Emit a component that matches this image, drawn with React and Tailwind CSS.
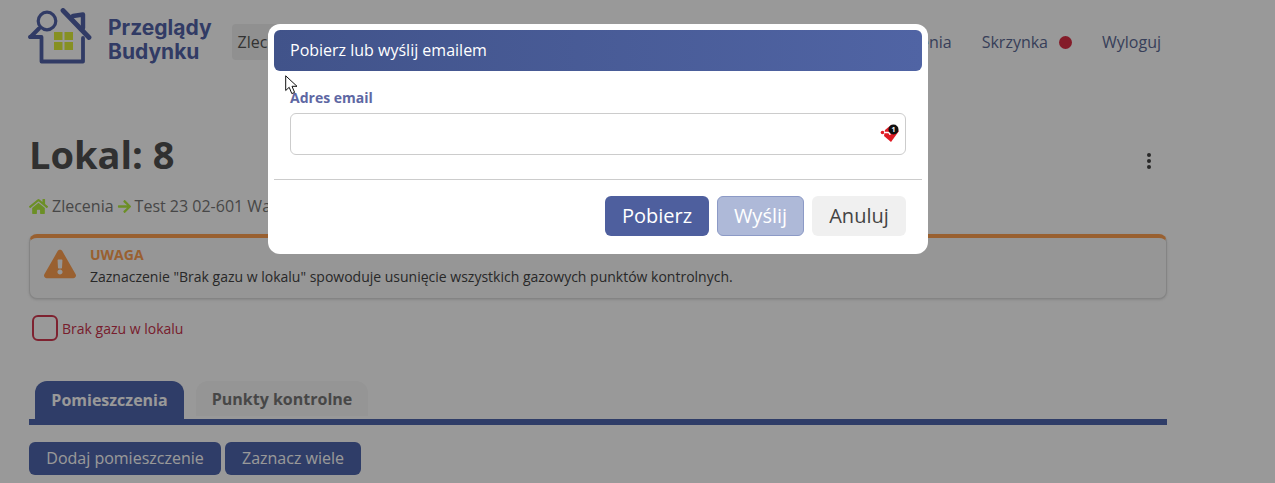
import { FaHome, FaArrowRight, FaExclamationTriangle } from 'react-icons/fa'

const font = "font-['Open_Sans',sans-serif]"

function Logo() {
  return (
    <svg width="66" height="56" viewBox="0 0 66 56" fill="none" className="shrink-0">
      <g stroke="#5263a8" strokeLinecap="round" strokeLinejoin="round">
        <path d="M2 29 L6 29 L13.5 29 V53.5 H55 V30" strokeWidth="3.8" />
        <path d="M35 2.5 L61 29.5" strokeWidth="4.8" />
        <path d="M45 8 L55 6.5 V20" strokeWidth="4.4" />
        <circle cx="19" cy="13" r="8.8" strokeWidth="3.2" />
        <path d="M11 20.5 L2.5 29" strokeWidth="4" />
      </g>
      <g fill="#e0f03a">
        <rect x="26" y="24" width="8.5" height="8" />
        <rect x="36.5" y="24" width="8.5" height="8" />
        <rect x="26" y="34" width="8.5" height="8" />
        <rect x="36.5" y="34" width="8.5" height="8" />
      </g>
    </svg>
  )
}

function TagBadge() {
  return (
    <svg width="22" height="22" viewBox="0 0 22 22" className="absolute right-[4px] top-[8px]">
      <path d="M6 8 L12 3 L20 9 L12 20 L5 14 Z" fill="#e01b24" />
      <circle cx="3.5" cy="10.5" r="1.8" fill="#e01b24" />
      <path d="M5 10.5 H9 Q11 10.5 11 13" stroke="#fff" strokeWidth="1.3" fill="none" />
      <circle cx="14.5" cy="7.5" r="5" fill="#111" />
      <text x="14.5" y="10" textAnchor="middle" fontSize="7" fontWeight="700" fill="#fff" fontFamily="Open Sans, sans-serif">1</text>
    </svg>
  )
}

function Cursor() {
  return (
    <svg width="15" height="21" viewBox="0 0 15 21" className="absolute left-[285px] top-[75px]">
      <path d="M0.7 0.8 V15.5 L4.2 12.3 L6.8 18.6 L9.6 17.4 L7 11.3 H12 Z" fill="#fff" stroke="#111" strokeWidth="1" />
    </svg>
  )
}

export default function App() {
  return (
    <div className={`relative h-[483px] overflow-hidden bg-white ${font}`}>
      <nav className="flex h-[84px] w-[1167px] items-center pl-[28px]">
        <div className="mb-[12px] flex items-center gap-[14px]">
          <Logo />
          <div className="mt-[7px] font-['Inter',sans-serif] text-[21px] font-bold leading-[24px] text-[#5263a8]">
            Przeglądy<br />Budynku
          </div>
        </div>
        <a className="ml-[20px] flex h-[36px] items-center rounded bg-[#f0f0f0] px-[6px] text-base text-[#555]">Zlecenia</a>
        <div className="ml-auto flex items-center text-base text-[#5d6a95]">
          <span>Ustawienia</span>
          <span className="ml-[30px]">Skrzynka</span>
          <span className="ml-[11px] h-[13px] w-[13px] rounded-full bg-[#dc2f45]" />
          <span className="ml-[30px] mr-[6px]">Wyloguj</span>
        </div>
      </nav>

      <main className="w-[1167px] pl-[29px] pt-[40px]">
        <div className="flex h-[60px] items-center justify-between">
          <h1 className="text-[38px] font-bold leading-none text-[#505050]">Lokal: 8</h1>
          <div className="mr-[16px] mt-[14px] flex flex-col gap-[2px]">
            <span className="h-[4px] w-[4px] rounded-full bg-[#444]" />
            <span className="h-[4px] w-[4px] rounded-full bg-[#444]" />
            <span className="h-[4px] w-[4px] rounded-full bg-[#444]" />
          </div>
        </div>
        <div className="mt-[11px] flex h-[22px] items-center text-base text-[#777]">
          <FaHome className="mr-[4px] text-[19px] text-[#b4ee40]" />
          <span>Zlecenia</span>
          <FaArrowRight className="mx-[3px] text-[15px] text-[#b4ee40]" />
          <span>Test 23 02-601 Warszawa</span>
        </div>

        <div className="mt-[17px] flex h-[65px] rounded-lg border border-t-4 border-[#ddd] border-t-[#ffa050] bg-[#fafafa] shadow-sm">
          <div className="flex w-[60px] justify-center pt-[10px]">
            <FaExclamationTriangle className="text-[32px] text-[#ffa050]" />
          </div>
          <div>
            <div className="mt-[8px] text-[14px] font-bold leading-[18px] text-[#ffa050]">UWAGA</div>
            <div className="mt-[4px] text-[14px] leading-[18px] text-[#444]">
              Zaznaczenie "Brak gazu w lokalu" spowoduje usunięcie wszystkich gazowych punktów kontrolnych.
            </div>
          </div>
        </div>

        <label className="ml-[4px] mt-[16px] flex items-center gap-[4px] text-[14px] text-[#c8324b]">
          <span className="-ml-[1px] h-[26px] w-[26px] rounded-md border-2 border-[#d33a50] bg-white" />
          Brak gazu w lokalu
        </label>

        <div className="mt-[40px] flex gap-[12px] border-b-[6px] border-[#4f66ad] pl-[6px]">
          <div className="flex h-[38px] w-[149px] items-center justify-center rounded-t-xl bg-[#4f66ad] text-base font-bold text-white">
            Pomieszczenia
          </div>
          <div className="flex h-[35px] w-[172px] items-center justify-center rounded-t-xl bg-[#f8f8f8] text-base font-bold text-[#777]">
            Punkty kontrolne
          </div>
        </div>

        <div className="mt-[17px] flex gap-[4px]">
          <button className="h-[33px] w-[192px] rounded-md bg-[#4f66ad] pb-[2px] text-base text-white">Dodaj pomieszczenie</button>
          <button className="h-[33px] w-[136px] rounded-md bg-[#4f66ad] pb-[2px] text-base text-white">Zaznacz wiele</button>
        </div>
      </main>

      <div className="absolute inset-0 bg-black/40" />

      <div className="absolute left-[268px] top-[24px] h-[230px] w-[660px] rounded-xl bg-white p-[6px]">
        <div className="flex h-[41px] items-center rounded-md bg-gradient-to-r from-[#41538a] to-[#5064a4] pb-[2px] pl-[16px] text-base text-white">
          Pobierz lub wyślij emailem
        </div>
        <div className="px-[16px]">
          <div className="mt-[17px] text-[14px] font-bold leading-[20px] text-[#5e67a3]">Adres email</div>
          <div className="relative mt-[5px] h-[42px] rounded-md border border-[#ccc]">
            <TagBadge />
          </div>
        </div>
        <div className="mt-[24px] border-t border-[#ccc]" />
        <div className="mr-[16px] mt-[16px] flex justify-end gap-[8px] text-[20px]">
          <button className="h-[40px] w-[104px] rounded-md bg-[#4e5f9e] text-white">Pobierz</button>
          <button className="h-[40px] w-[87px] rounded-md border border-[#8c9ac6] bg-[#aeb9d8] text-white">Wyślij</button>
          <button className="h-[40px] w-[94px] rounded-md bg-[#f0f0f0] text-[#444]">Anuluj</button>
        </div>
      </div>

      <Cursor />
    </div>
  )
}
